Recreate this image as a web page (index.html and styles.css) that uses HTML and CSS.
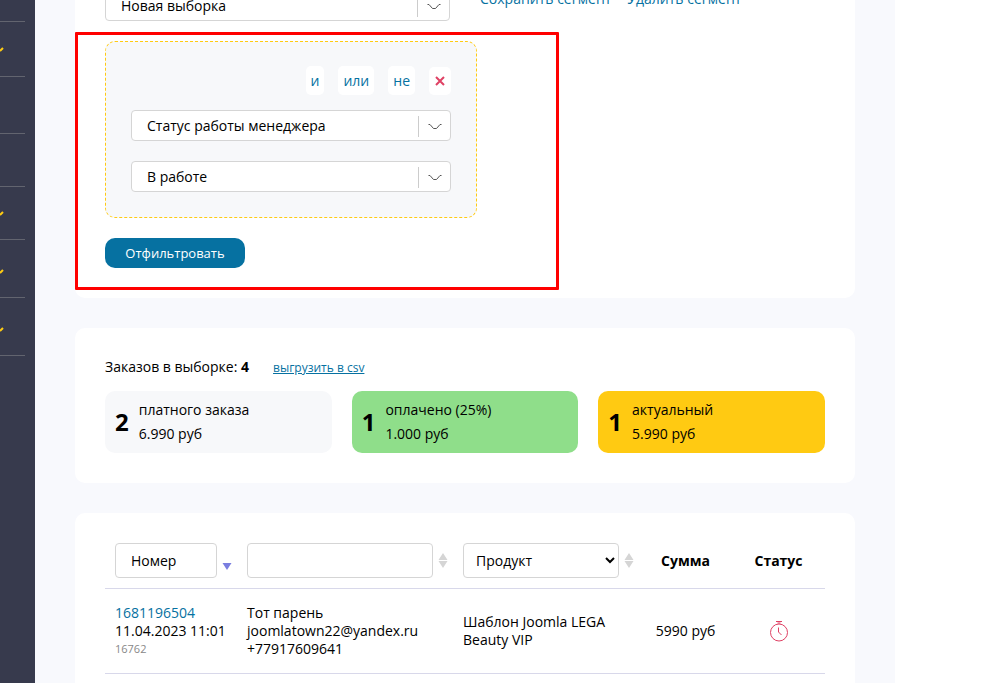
FILE: index.html
```html
<!DOCTYPE html>
<html lang="ru">
<head>
<meta charset="utf-8">
<title>Заказы</title>
<link rel="stylesheet" href="styles.css">
</head>
<body>
<div class="page">
  <nav class="sidebar">
    <ul class="menu">
      <li class="menu-item short"></li>
      <li class="menu-item"><svg class="mark" viewBox="0 0 4 6"><path d="M0 5 3 2"/></svg></li>
      <li class="menu-item"></li>
      <li class="menu-item"></li>
      <li class="menu-item"><svg class="mark" viewBox="0 0 4 6"><path d="M0 5 3 2"/></svg></li>
      <li class="menu-item tall"><svg class="mark" viewBox="0 0 4 6"><path d="M0 5 3 2"/></svg></li>
      <li class="menu-item tall"><svg class="mark" viewBox="0 0 4 6"><path d="M0 5 3 2"/></svg></li>
    </ul>
  </nav>
  <main class="content">
    <section class="card card-filter">
      <div class="segment">
        <div class="pick pick-wide">
          <select aria-label="Новая выборка"><option>Новая выборка</option></select>
          <svg class="arrow" viewBox="0 0 14 8"><path d="M0.500 1.500H2L5.500 5.500H8.500L12 1.500H13.500"/></svg>
        </div>
        <div class="segment-links">
          <a href="#">Сохранить сегмент</a>
          <a href="#">Удалить сегмент</a>
        </div>
      </div>
      <div class="group">
        <div class="chips">
          <button class="chip" type="button">и</button>
          <button class="chip" type="button">или</button>
          <button class="chip" type="button">не</button>
          <button class="chip chip-remove" type="button"><svg viewBox="0 0 10 10"><path d="M1 1 9 9M9 1 1 9"/></svg></button>
        </div>
        <div class="pick">
          <select aria-label="Статус работы менеджера"><option>Статус работы менеджера</option></select>
          <svg class="arrow" viewBox="0 0 14 8"><path d="M0.500 1.500H2L5.500 5.500H8.500L12 1.500H13.500"/></svg>
        </div>
        <div class="pick">
          <select aria-label="В работе"><option>В работе</option></select>
          <svg class="arrow" viewBox="0 0 14 8"><path d="M0.500 1.500H2L5.500 5.500H8.500L12 1.500H13.500"/></svg>
        </div>
      </div>
      <button class="submit" type="button">Отфильтровать</button>
      <div class="highlight"></div>
    </section>

    <section class="card">
      <div class="summary">
        <span>Заказов в выборке: <b>4</b></span>
        <a class="export" href="#">выгрузить в csv</a>
      </div>
      <div class="tiles">
        <div class="tile"><b>2</b><p>платного заказа<br>6.990 руб</p></div>
        <div class="tile paid"><b>1</b><p>оплачено (25%)<br>1.000 руб</p></div>
        <div class="tile actual"><b>1</b><p>актуальный<br>5.990 руб</p></div>
      </div>
    </section>

    <section class="card card-orders">
      <table class="orders">
        <colgroup><col class="c-number"><col class="c-client"><col class="c-product"><col class="c-sum"><col class="c-status"></colgroup>
        <thead>
          <tr>
            <th><div class="head"><input type="text" placeholder="Номер" aria-label="Номер"><svg class="sort sort-active" viewBox="0 0 10 16"><path d="M0.500 8H9.500L5 15Z"/></svg></div></th>
            <th><div class="head"><input type="text"><svg class="sort" viewBox="0 0 10 16"><path d="M0.500 7H9.500L5 0ZM0.500 8H9.500L5 15Z"/></svg></div></th>
            <th><div class="head"><select aria-label="Продукт"><option>Продукт</option></select><svg class="sort" viewBox="0 0 10 16"><path d="M0.500 7H9.500L5 0ZM0.500 8H9.500L5 15Z"/></svg></div></th>
            <th>Сумма</th>
            <th>Статус</th>
          </tr>
        </thead>
        <tbody>
          <tr>
            <td><a href="#">1681196504</a><br>11.04.2023 11:01<br><small>16762</small></td>
            <td>Тот парень<br>joomlatown22@yandex.ru<br>+77917609641</td>
            <td>Шаблон Joomla LEGA Beauty VIP</td>
            <td class="mid">5990 руб</td>
            <td class="mid"><svg class="timer" viewBox="0 0 20 22"><circle cx="10" cy="12.500" r="8.500"/><path d="M7 1.500H13M8.500 3H11.500M9.500 7.500V12L12.500 15"/></svg></td>
          </tr>
        </tbody>
      </table>
    </section>
  </main>
</div>
</body>
</html>
```
FILE: styles.css
```css
* { box-sizing: border-box; }
body {
  margin: 0;
  overflow: hidden;
  background: #fff;
  color: #000;
  font: 14px/18px "Open Sans", "Noto Sans", sans-serif;
}
a { color: #0671a1; text-decoration: none; }
button, input, select { font: inherit; color: inherit; }

.page { display: flex; height: 100vh; overflow: hidden; }
.sidebar { flex: 0 0 35px; background: #373a4d; }
.menu { list-style: none; margin: 0; padding: 0 10px 0 0; }
.menu-item {
  display: flex;
  align-items: center;
  height: 53px;
  border-bottom: 1px solid #62646f;
}
.menu-item.short { height: 22px; }
.menu-item.tall { height: 58px; }
.menu-item.tall .mark { margin-top: 4px; }
.menu-item:nth-child(2) { height: 55px; }
.menu-item:nth-child(3) { height: 57px; }
.mark { width: 4px; height: 6px; fill: none; stroke: #ffcb12; stroke-width: 2; }

.content {
  flex: 1;
  min-width: 0;
  margin-right: 105px;
  padding: 0 40px;
  background: #f8f9fd;
}
.card {
  margin-bottom: 30px;
  padding: 30px;
  border-radius: 10px;
  background: #fff;
}
.card-filter { position: relative; margin-top: -40px; border-radius: 0 0 10px 10px; }
.card-orders { min-height: 220px; }

.segment { display: flex; gap: 30px; margin-bottom: 20px; }
.segment-links { display: flex; gap: 16px; }
.pick { position: relative; }
.pick select {
  display: block;
  width: 100%;
  height: 31px;
  padding: 0 40px 0 15px;
  border: 1px solid #d5d5d5;
  border-radius: 4px;
  background: #fff;
  appearance: none;
}
.pick-wide { width: 345px; }
.pick::after {
  content: "";
  position: absolute;
  top: 6px;
  right: 32px;
  height: 21px;
  border-left: 1px solid #ccc;
}
.arrow {
  position: absolute;
  top: 13px;
  right: 9px;
  width: 14px;
  height: 8px;
  fill: none;
  stroke: #555;
  pointer-events: none;
}

.group {
  display: flex;
  flex-direction: column;
  gap: 20px;
  max-width: 372px;
  margin-bottom: 20px;
  padding: 24px 25px 25px;
  border: 1px dashed #ffcb12;
  border-radius: 10px;
  background: #f7f8fa;
}
.chips { display: flex; justify-content: flex-end; gap: 14px; margin-bottom: -5px; }
.chip {
  height: 29px;
  padding: 0 5px;
  border: 0;
  border-radius: 5px;
  background: #fff;
  color: #0671a1;
}
.chip-remove { display: flex; align-items: center; justify-content: center; width: 22px; height: 28px; align-self: flex-end; }
.chip-remove svg { flex: none; width: 10px; height: 10px; stroke: #df4164; stroke-width: 2; }

.submit {
  display: block;
  width: 140px;
  height: 30px;
  padding: 0;
  border: 0;
  border-radius: 10px;
  background: #0671a1;
  color: #fff;
  font-size: 13px;
}
.highlight {
  position: absolute;
  top: 72px;
  left: 0;
  width: 484px;
  height: 258px;
  border: 3px solid #f00;
  border-radius: 1px;
  pointer-events: none;
}

.summary { display: flex; align-items: baseline; gap: 24px; margin-bottom: 14px; }
.export { font-size: 12px; text-decoration: underline; }
.tiles { display: grid; grid-template-columns: repeat(3, 1fr); gap: 20px; }
.tile {
  display: flex;
  align-items: center;
  gap: 10px;
  padding: 7px 10px;
  border-radius: 10px;
  background: #f7f8fa;
}
.tile b { font-size: 24px; line-height: 32px; }
.tile p { margin: 0; line-height: 24px; }
.tile.paid { background: #8fde8a; }
.tile.actual { background: #ffca12; }

.orders { width: 100%; table-layout: fixed; border-collapse: collapse; }
.c-number { width: 132px; }
.c-client { width: 216px; }
.c-product { width: 186px; }
.orders tr { border-bottom: 1px solid #d8d8ea; }
.orders th { padding: 0 10px 10px; }
.orders td { padding: 15px 10px; }
.orders td.mid { text-align: center; }
.orders small { color: #888; font-size: 11px; vertical-align: top; }
.head { display: flex; align-items: center; gap: 5px; margin-right: -5px; }
.head input, .head select {
  flex: 1;
  min-width: 0;
  height: 35px;
  padding: 0 15px;
  border: 1px solid #d5d5d5;
  border-radius: 4px;
  background: #fff;
  font-weight: 400;
}
.head select { padding: 0 0 0 8px; }
.head input::placeholder { color: #000; opacity: 1; }
.sort { flex: none; width: 10px; height: 16px; fill: #d5d5d5; }
.sort-active { margin-top: 4px; fill: #7a7ee0; }
.timer { display: block; width: 20px; height: 22px; margin: 0 auto; fill: none; stroke: #df4164; stroke-width: 1; }
```
